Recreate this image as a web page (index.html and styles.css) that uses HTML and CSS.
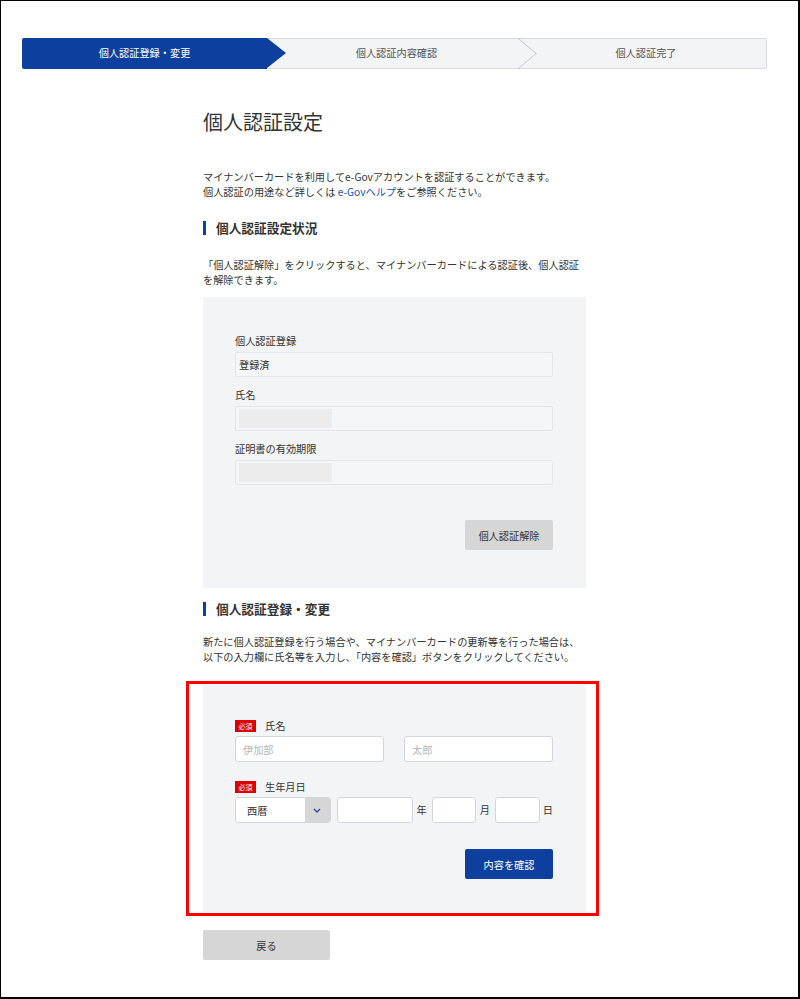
FILE: index.html
```html
<!DOCTYPE html>
<html lang="ja">
<head>
<meta charset="utf-8">
<title>個人認証設定</title>
<link rel="stylesheet" href="styles.css">
</head>
<body>
<div class="frame">
  <ol class="stepper">
    <li class="step step-active">個人認証登録・変更</li>
    <li class="step step-mid">個人認証内容確認</li>
    <li class="step step-last">個人認証完了</li>
  </ol>
  <main class="content">
    <h1 class="page-title">個人認証設定</h1>
    <p class="intro">マイナンバーカードを利用してe-Govアカウントを認証することができます。<br>個人認証の用途など詳しくは <a href="#" class="link">e-Govヘルプ</a>をご参照ください。</p>

    <h2 class="section-title">個人認証設定状況</h2>
    <p class="desc">「個人認証解除」をクリックすると、マイナンバーカードによる認証後、個人認証を解除できます。</p>
    <section class="panel panel-status">
      <div class="field-label">個人認証登録</div>
      <div class="readonly">登録済</div>
      <div class="field-label">氏名</div>
      <div class="readonly"><span class="masked"></span></div>
      <div class="field-label">証明書の有効期限</div>
      <div class="readonly"><span class="masked"></span></div>
      <div class="actions actions-status"><button class="btn btn-gray btn-release" type="button">個人認証解除</button></div>
    </section>

    <h2 class="section-title section-title-2">個人認証登録・変更</h2>
    <p class="desc desc-2">新たに個人認証登録を行う場合や、マイナンバーカードの更新等を行った場合は、以下の入力欄に氏名等を入力し、「内容を確認」ボタンをクリックしてください。</p>
    <div class="highlight">
      <section class="panel panel-form">
        <div class="req-label"><span class="badge">必須</span><span>氏名</span></div>
        <div class="name-row">
          <input class="text-input" type="text" placeholder="伊加部">
          <input class="text-input" type="text" placeholder="太郎">
        </div>
        <div class="req-label req-label-2"><span class="badge">必須</span><span>生年月日</span></div>
        <div class="date-row">
          <div class="select">
            <span class="select-value">西暦</span>
            <span class="select-arrow"><svg width="8" height="5" viewBox="0 0 8 5"><polyline points="1,1 4,4 7,1" fill="none" stroke="#1f4ea5" stroke-width="1.4"/></svg></span>
          </div>
          <input class="text-input in-year" type="text">
          <span class="unit">年</span>
          <input class="text-input in-month" type="text">
          <span class="unit">月</span>
          <input class="text-input in-day" type="text">
          <span class="unit unit-day">日</span>
        </div>
        <div class="actions actions-form"><button class="btn btn-blue btn-confirm" type="button">内容を確認</button></div>
      </section>
    </div>

    <div class="back"><button class="btn btn-gray btn-back" type="button">戻る</button></div>
  </main>
</div>
</body>
</html>
```

FILE: styles.css
```css
* { box-sizing: border-box; }
html, body { margin: 0; padding: 0; background: #fff; }
body {
  font-family: "Noto Sans CJK JP", "Noto Sans", sans-serif;
  font-size: 10.2px;
  color: #333;
}
.frame {
  width: 800px;
  height: 999px;
  border: solid #000;
  border-width: 1px 2px 2px 1px;
  padding-top: 37px;
  overflow: hidden;
}

/* stepper */
.stepper {
  list-style: none;
  margin: 0 0 0 21px;
  padding: 0;
  width: 745px;
  height: 31px;
  display: grid;
  grid-template-columns: 245px 250px 250px;
}
.step {
  position: relative;
  display: flex;
  align-items: center;
  justify-content: center;
  font-size: 10.2px;
  line-height: 1;
}
.step-active {
  background: #0d3f9e;
  color: #fff;
  border-radius: 2px 0 0 2px;
  z-index: 2;
}
.step-active::after {
  content: "";
  position: absolute;
  left: 100%;
  top: 0;
  border-style: solid;
  border-width: 15.5px 0 15.5px 19px;
  border-color: transparent transparent transparent #0d3f9e;
}
.step-mid, .step-last {
  background: #f3f4f6;
  border-top: 1px solid #d9dce1;
  border-bottom: 1px solid #d9dce1;
  color: #555;
  padding-left: 9px;
}
.step-mid { z-index: 1; }
.step-mid::after {
  content: "";
  position: absolute;
  left: 100%;
  top: -1px;
  width: 20px;
  height: 31px;
  background: #c9ccd2;
  clip-path: polygon(0 0, 1.4px 0, 100% 50%, 1.4px 100%, 0 100%, calc(100% - 1.4px) 50%);
}
.step-last {
  border-right: 1px solid #d9dce1;
  border-radius: 0 2px 2px 0;
}

/* content column */
.content {
  margin-left: 202px;
  width: 383px;
}
.page-title {
  margin: 39px 0 0;
  font-size: 20px;
  line-height: 28px;
  font-weight: normal;
  color: #333;
}
.intro {
  margin: 33px 0 0;
  line-height: 15px;
}
.link { color: #1a4fb2; text-decoration: none; }

.section-title {
  margin: 20px 0 0;
  display: flex;
  align-items: center;
  gap: 10px;
  font-size: 12.7px;
  font-weight: bold;
  line-height: 18px;
  height: 18px;
  color: #333;
}
.section-title::before {
  content: "";
  width: 3px;
  height: 14px;
  background: #0d3f9e;
}
.section-title-2 { margin-top: 12px; }

.desc {
  margin: 20px 0 0;
  line-height: 15px;
}
.desc-2 { margin-top: 16px; }

.panel { background: #f3f4f6; }
.panel-status {
  margin-top: 10px;
  padding: 35px 33px 38px 32px;
}
.field-label {
  line-height: 18px;
  height: 18px;
  margin-bottom: 2px;
}
.readonly {
  height: 25px;
  margin-bottom: 9px;
  background: #f5f6f8;
  border: 1px solid #e3e6ea;
  border-radius: 2px;
  padding-left: 3px;
  display: flex;
  align-items: center;
}
.masked {
  display: block;
  width: 93px;
  height: 19px;
  background: #ececec;
}
.actions { display: flex; justify-content: flex-end; }
.actions-status { margin-top: 35px; }

.btn {
  height: 30px;
  border: none;
  border-radius: 2px;
  font-family: inherit;
  font-size: 10.2px;
  padding: 0;
  cursor: pointer;
}
.btn-gray { background: #d6d6d6; color: #333; }
.btn-blue { background: #0d3f9e; color: #fff; }
.btn-release, .btn-confirm { width: 88px; }
.btn-back { width: 127px; }

/* highlighted form */
.highlight {
  margin: 17px -13px 0 -17px;
  border: 3px solid #f00;
  padding: 1px 10px 1px 14px;
}
.panel-form {
  padding: 33px 33px 33px 32px;
}
.req-label {
  display: flex;
  align-items: center;
  gap: 9px;
  height: 16px;
  line-height: 16px;
}
.badge {
  display: inline-flex;
  align-items: center;
  justify-content: center;
  width: 21px;
  height: 12px;
  background: #dc0000;
  color: #fff;
  font-size: 7px;
  line-height: 1;
}
.req-label-2 { margin-top: 17px; }
.name-row {
  margin-top: 2px;
  display: grid;
  grid-template-columns: 149px 149px;
  column-gap: 20px;
}
.text-input {
  height: 26px;
  border: 1px solid #d3d7dd;
  border-radius: 3px;
  background: #fff;
  padding: 0 7px;
  font-family: inherit;
  font-size: 10.2px;
  color: #333;
  outline: none;
  min-width: 0;
}
.text-input::placeholder { color: #b5b5b5; }
.date-row {
  margin-top: 2px;
  display: flex;
  align-items: center;
}
.select {
  width: 96px;
  height: 26px;
  border: 1px solid #d3d7dd;
  border-radius: 3px;
  background: #fff;
  display: flex;
  overflow: hidden;
}
.select-value {
  flex: 1;
  display: flex;
  align-items: center;
  padding-left: 11px;
}
.select-arrow {
  width: 25px;
  background: #d6d6d6;
  display: flex;
  align-items: center;
  justify-content: center;
}
.in-year { width: 76px; margin-left: 6px; }
.in-month { width: 44px; margin-left: 5px; }
.in-day { width: 45px; margin-left: 5px; }
.unit { margin-left: 4px; line-height: 1; }
.unit-day { margin-left: 3px; }
.actions-form { margin-top: 26px; }

.back { margin-top: 14px; }
```
